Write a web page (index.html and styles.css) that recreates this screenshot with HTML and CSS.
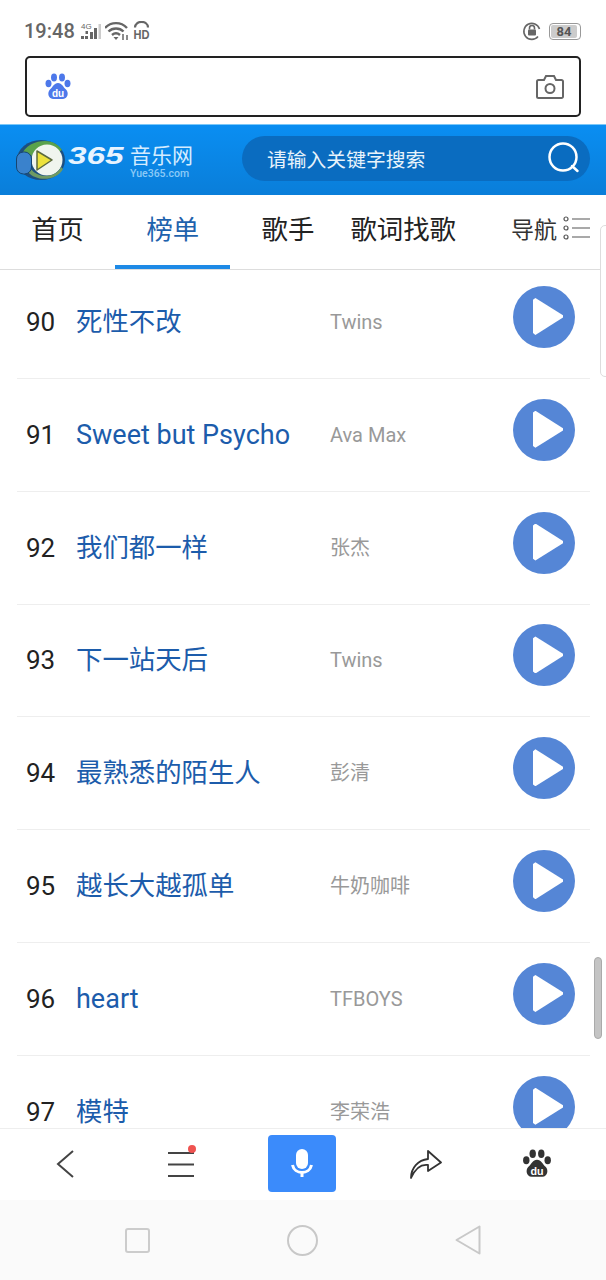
FILE: index.html
```html
<!DOCTYPE html>
<html lang="zh-CN">
<head>
  <meta charset="UTF-8">
  <title>365音乐网</title>
  <link rel="stylesheet" href="styles.css">
</head>
<body>
  <div class="phone">
    <div class="status">
      <span class="time">19:48</span>
      <svg class="st-signal" width="22" height="20" viewBox="0 0 22 20">
        <text x="1" y="7.500" class="st-4g">4G</text>
        <g fill="#666">
          <rect x="1" y="15" width="3" height="3"/><rect x="5" y="15" width="3" height="3"/><rect x="5.500" y="10" width="2.500" height="3"/>
          <rect x="10" y="11" width="3" height="7"/><rect x="14" y="7" width="3" height="11"/>
        </g>
        <rect x="18.500" y="3" width="2.500" height="15" fill="#ccc"/>
      </svg>
      <svg class="st-wifi" width="24" height="20" viewBox="0 0 24 20" fill="none" stroke="#666" stroke-width="2.400">
        <path d="M0 7c6-6.500 16-6.500 22 0M3.500 10.500c4-4 11-4 15 0M7 14c2.500-2.200 5.500-2.200 8 0"/>
        <path d="M11 19l-2.500-3h5z" fill="#666" stroke="none"/>
        <path d="M18 13v6M22 14v5" stroke-width="1.500"/>
      </svg>
      <svg class="st-hd" width="19" height="20" viewBox="0 0 19 20" fill="none" stroke="#666" stroke-width="2.200">
        <path d="M2 6.500C2-1 15-1 15 6.500"/>
        <text x="0.500" y="18" class="st-hd-text" textLength="16" lengthAdjust="spacingAndGlyphs">HD</text>
      </svg>
      <span class="status-right">
        <svg width="20" height="20" viewBox="0 0 20 20" fill="none" stroke="#666" stroke-width="1.600">
          <path d="M17.500 8A8 8 0 1 0 16 15.500"/>
          <rect x="6" y="8.500" width="8" height="6" rx="1" fill="#666" stroke="none"/>
          <path d="M7.500 8.500V7a2.500 2.500 0 0 1 5 0v1.500"/>
        </svg>
        <span class="battery"><span class="battery-level">84</span></span>
      </span>
    </div>

    <div class="addr">
      <svg class="paw" width="26" height="28" viewBox="0 0 26 28" fill="#4d78ea">
        <ellipse cx="9" cy="4.500" rx="3" ry="4"/>
        <ellipse cx="17" cy="4.500" rx="3" ry="4"/>
        <ellipse cx="3.500" cy="10.500" rx="3" ry="3.700"/>
        <ellipse cx="22.500" cy="10.500" rx="3" ry="3.700"/>
        <path d="M13 10c4 0 5 4 8 6.500 3 3 2 9-3 9.500H8c-5-.5-6-6.500-3-9.500C8 14 9 10 13 10z"/>
        <text x="13" y="24" class="paw-du">du</text>
      </svg>
      <svg width="30" height="26" viewBox="0 0 30 26" fill="none" stroke="#666" stroke-width="2">
        <path d="M2 7.500a1.500 1.500 0 0 1 1.500-1.500H9l2-4h8l2 4h5.500A1.500 1.500 0 0 1 28 7.500v15a1.500 1.500 0 0 1-1.500 1.500h-23A1.500 1.500 0 0 1 2 22.500z"/>
        <circle cx="15" cy="14.500" r="4.500"/>
      </svg>
    </div>

    <header class="site-head">
      <div class="logo">
        <svg width="52" height="42" viewBox="0 0 52 42">
          <ellipse cx="27" cy="21" rx="24" ry="20" fill="#1d4f80"/>
          <path d="M7 18C10 6 22 2 31 2c8 0 14 4 17 9l-5 3C38 8 22 7 17 18z" fill="#5aa24c"/>
          <circle cx="33" cy="21" r="15.500" fill="#f0f5ee"/>
          <path d="M17 30c6 9 24 10 30-2l2 2c-6 12-27 13-35 3z" fill="#6f9a62"/>
          <path d="M23 12l15 9-15 10z" fill="#ece23c" stroke="#5b6a3e" stroke-width="1.500" stroke-linejoin="round"/>
          <rect x="2.500" y="13" width="15" height="22" rx="7" fill="#3a82cc" stroke="#164571"/>
        </svg>
        <div class="logo-text">
          <div class="logo-main"><span class="logo-num">365</span>音乐网</div>
          <div class="logo-sub">Yue365.com</div>
        </div>
      </div>
      <div class="search">
        <span>请输入关键字搜索</span>
        <svg width="34" height="34" viewBox="0 0 34 34" fill="none" stroke="#fff" stroke-width="2.500">
          <circle cx="16" cy="16" r="13.500"/>
          <path d="M25 25l5.500 5" stroke-linecap="round"/>
        </svg>
      </div>
    </header>

    <nav class="tabs">
      <a class="tab">首页</a>
      <a class="tab active">榜单</a>
      <a class="tab">歌手</a>
      <a class="tab">歌词找歌</a>
      <span class="tab-more">
        导航
        <svg width="27" height="24" viewBox="0 0 27 24" fill="none" stroke="#555" stroke-width="1.200">
          <circle cx="3" cy="3" r="2"/><circle cx="3" cy="12" r="2"/><circle cx="3" cy="21" r="2"/>
          <path d="M9 3h18M9 12h18M9 21h18"/>
        </svg>
      </span>
    </nav>

    <div class="list">
      <ul class="songs">
        <li class="song"><span class="rank">90</span><a class="name">死性不改</a><span class="singer">Twins</span><span class="play"><i></i></span></li>
        <li class="song"><span class="rank">91</span><a class="name name-en">Sweet but Psycho</a><span class="singer">Ava Max</span><span class="play"><i></i></span></li>
        <li class="song"><span class="rank">92</span><a class="name">我们都一样</a><span class="singer">张杰</span><span class="play"><i></i></span></li>
        <li class="song"><span class="rank">93</span><a class="name">下一站天后</a><span class="singer">Twins</span><span class="play"><i></i></span></li>
        <li class="song"><span class="rank">94</span><a class="name">最熟悉的陌生人</a><span class="singer">彭清</span><span class="play"><i></i></span></li>
        <li class="song"><span class="rank">95</span><a class="name">越长大越孤单</a><span class="singer">牛奶咖啡</span><span class="play"><i></i></span></li>
        <li class="song"><span class="rank">96</span><a class="name name-en">heart</a><span class="singer">TFBOYS</span><span class="play"><i></i></span></li>
        <li class="song"><span class="rank">97</span><a class="name">模特</a><span class="singer">李荣浩</span><span class="play"><i></i></span></li>
      </ul>
    </div>

    <div class="toolbar">
      <svg width="24" height="32" viewBox="0 0 24 32" fill="none" stroke="#444" stroke-width="2"><path d="M19 3L4 16l15 13"/></svg>
      <span class="menu">
        <svg width="26" height="26" viewBox="0 0 26 26" fill="none" stroke="#444" stroke-width="2"><path d="M0 2h26M0 13.500h26M0 25h26"/></svg>
        <i class="dot"></i>
      </span>
      <span class="mic">
        <svg width="24" height="34" viewBox="0 0 24 34" fill="none" stroke="#fff" stroke-width="3">
          <rect x="6" y="2" width="12" height="20" rx="6" fill="#fff" stroke="none"/>
          <path d="M2.500 18c2 10 17 10 19 0M12 25v5"/>
        </svg>
      </span>
      <svg width="32" height="30" viewBox="0 0 32 30" fill="none" stroke="#333" stroke-width="1.800" stroke-linejoin="round">
        <path d="M1 29C1 19 8 11 18 10V2l13 11.500L18 22v-6C11 15 5 20 1 29z"/>
      </svg>
      <svg width="28" height="30" viewBox="0 0 26 28" fill="#333">
        <ellipse cx="9" cy="4.500" rx="3" ry="4"/>
        <ellipse cx="17" cy="4.500" rx="3" ry="4"/>
        <ellipse cx="3" cy="10.500" rx="3" ry="3.700"/>
        <ellipse cx="23" cy="10.500" rx="3" ry="3.700"/>
        <path d="M13 10c4 0 5 4 8 6.500 3 3 2 9-3 9.500H8c-5-.5-6-6.500-3-9.500C8 14 9 10 13 10z"/>
        <text x="13" y="24" class="paw-du">du</text>
      </svg>
    </div>

    <div class="sysnav">
      <span class="sys-square"></span>
      <span class="sys-circle"></span>
      <svg width="26" height="30" viewBox="0 0 26 30" fill="none" stroke="#c8c8c8" stroke-width="2" stroke-linejoin="round"><path d="M1.500 15L24.500 1.500v27z"/></svg>
    </div>

    <div class="side-handle"></div>
    <div class="scroll-thumb"></div>
  </div>
</body>
</html>
```

FILE: styles.css
```css
* {
  box-sizing: border-box;
}

body {
  margin: 0;
  background: #fff;
  font-family: Roboto, "Noto Sans CJK SC", sans-serif;
}

.phone {
  position: relative;
  display: flex;
  flex-direction: column;
  width: 606px;
  height: 1280px;
  overflow: hidden;
}

/* status bar */
.status {
  display: flex;
  align-items: center;
  height: 56px;
  padding: 6px 25px 0 24px;
  flex: none;
}

.time {
  font-size: 20px;
  font-weight: 500;
  color: #666;
  margin-right: 5px;
}

.st-wifi {
  margin-left: 3px;
}

.st-hd {
  margin-left: 4px;
}

.st-4g {
  font: 8px "Liberation Sans", sans-serif;
  fill: #666;
}

.st-hd-text {
  font: bold 13.500px "Liberation Sans", sans-serif;
  fill: #666;
  stroke: none;
}

.status-right {
  display: flex;
  align-items: center;
  gap: 7px;
  margin-left: auto;
}

.battery {
  display: block;
  width: 32px;
  height: 17px;
  padding: 1px;
  border: 1px solid #999;
  border-radius: 4px;
}

.battery-level {
  display: block;
  width: 26px;
  height: 13px;
  background: #ccc;
  border-radius: 2px;
  font-size: 13px;
  font-weight: 700;
  line-height: 13px;
  text-align: center;
  color: #555;
}

/* address box */
.addr {
  display: flex;
  align-items: center;
  justify-content: space-between;
  flex: none;
  height: 61px;
  margin: 0 25px 7px;
  padding: 0 14px 0 18px;
  border: 2px solid #222;
  border-radius: 5px;
}

.paw-du {
  font: bold 10px "Liberation Sans", sans-serif;
  fill: #fff;
  text-anchor: middle;
}

/* site header */
.site-head {
  display: flex;
  align-items: center;
  flex: none;
  height: 71px;
  padding: 0 16px 0 14px;
  background: linear-gradient(#0a8ef2, #0a7ed9);
  border-top: 1px solid #7cc8f8;
}

.logo {
  display: flex;
  align-items: center;
  width: 228px;
  flex: none;
}

.logo-text {
  margin-left: 2px;
  padding-top: 2px;
}

.logo-main {
  display: flex;
  align-items: center;
  font-size: 21px;
  line-height: 24px;
  color: #d5ecff;
  white-space: nowrap;
}

.logo-num {
  display: inline-block;
  width: 62px;
  font-family: "Liberation Sans", sans-serif;
  font-size: 23px;
  font-weight: 700;
  font-style: italic;
  color: #e8f4ff;
  transform: scaleX(1.45);
  transform-origin: left center;
}

.logo-sub {
  font-size: 10.500px;
  font-weight: 500;
  line-height: 11px;
  padding-left: 62px;
  color: #8ccaf7;
}

.search {
  display: flex;
  align-items: center;
  justify-content: space-between;
  flex: 1;
  height: 45px;
  padding: 0 9px 0 25px;
  margin-top: -4px;
  background: #0a6cc0;
  border-radius: 23px;
  font-size: 19.800px;
  color: #e8f3fb;
}

/* tabs */
.tabs {
  display: flex;
  align-items: stretch;
  flex: none;
  height: 75px;
  border-bottom: 1px solid #ddd;
}

.tab {
  display: flex;
  align-items: center;
  justify-content: center;
  width: 115.200px;
  padding-bottom: 9px;
  font-size: 26.400px;
  color: #222;
  white-space: nowrap;
}

.tab.active {
  color: #1f62ad;
  border-bottom: 4px solid #1e8ae6;
  padding-bottom: 5px;
}

.tab-more {
  display: flex;
  align-items: center;
  gap: 6px;
  margin-left: auto;
  padding: 0 16px 8px 0;
  font-size: 23px;
  color: #333;
}

/* song list */
.list {
  flex: 1;
  min-height: 0;
  overflow: hidden;
}

.songs {
  list-style: none;
  margin: -4px 16px 0 17px;
  padding: 0;
}

.song {
  display: flex;
  align-items: center;
  height: 112.850px;
  padding-left: 9px;
  border-bottom: 1px solid #eee;
}

.rank {
  width: 50px;
  font-size: 26px;
  color: #222;
  flex: none;
}

.name {
  width: 254px;
  font-size: 26.400px;
  line-height: 34px;
  color: #1c5cab;
  flex: none;
  white-space: nowrap;
}

.name-en {
  font-size: 27px;
}

.singer {
  flex: 1;
  font-size: 20px;
  line-height: 28px;
  color: #999;
}

.play {
  display: block;
  position: relative;
  width: 62px;
  height: 62px;
  margin: 0 15px 10px 0;
  background: #5586d6;
  border-radius: 50%;
  flex: none;
}

.play i {
  position: absolute;
  left: 20px;
  top: 12px;
  width: 30px;
  height: 37px;
  background: #fff;
  clip-path: polygon(8% 0, 100% 47%, 100% 53%, 8% 100%, 0 95%, 0 5%);
}

/* bottom bars */
.toolbar {
  display: grid;
  grid-template-columns: 132px 98px 144px 104px 118px;
  align-items: center;
  justify-items: center;
  flex: none;
  height: 72px;
  padding-bottom: 2px;
  background: #fff;
  border-top: 1px solid #eee;
}

.menu {
  position: relative;
  display: block;
  height: 26px;
}

.dot {
  position: absolute;
  top: -6px;
  right: -2px;
  width: 8px;
  height: 8px;
  background: #ef5350;
  border-radius: 50%;
}

.mic {
  display: flex;
  align-items: center;
  justify-content: center;
  width: 68px;
  height: 57px;
  background: #3b8bfb;
  border-radius: 4px;
}

.sysnav {
  display: flex;
  align-items: center;
  justify-content: center;
  gap: 137px;
  flex: none;
  height: 80px;
  background: #fafafa;
}

.sys-square {
  display: block;
  width: 25px;
  height: 25px;
  border: 2px solid #ccc;
  border-radius: 3px;
}

.sys-circle {
  display: block;
  width: 31px;
  height: 31px;
  border: 2px solid #c8c8c8;
  border-radius: 50%;
}

/* things on top of the page */
.side-handle {
  position: absolute;
  left: 600px;
  top: 225px;
  width: 12px;
  height: 152px;
  background: #fff;
  border: 1px solid #ddd;
  border-radius: 5px;
}

.scroll-thumb {
  position: absolute;
  left: 594px;
  top: 957px;
  width: 8px;
  height: 82px;
  background: #c4c4c4;
  border: 1px solid #aaa;
  border-radius: 4px;
}
```
